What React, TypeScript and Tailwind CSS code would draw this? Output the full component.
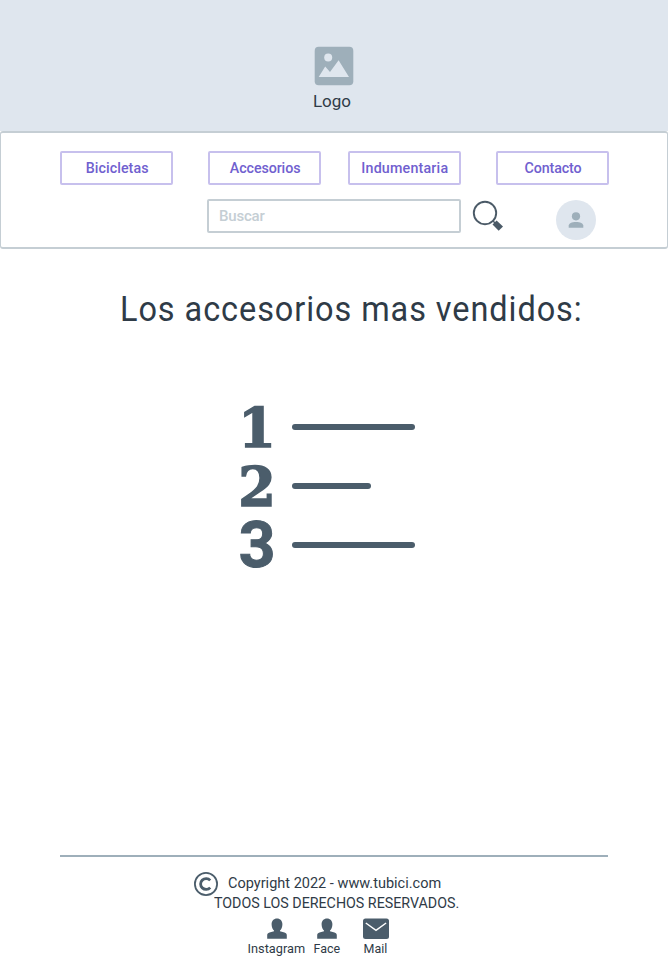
import React from 'react';

const navItems = [
  { label: 'Bicicletas', gap: 'ml-[60px]', type: 'tracking-[0.08px]' },
  { label: 'Accesorios', gap: 'ml-[35px]', type: 'tracking-[-0.1px]' },
  { label: 'Indumentaria', gap: 'ml-[27px]', type: 'tracking-[0.2px]' },
  { label: 'Contacto', gap: 'ml-[35px]', type: 'tracking-[-0.1px]' },
];

function ImageIcon() {
  return (
    <svg width="40" height="40" viewBox="0 0 40 40" className="block">
      <rect x="0.7" y="0.7" width="38.6" height="38.6" rx="4" fill="#9eafba" />
      <circle cx="14.2" cy="11.5" r="4" fill="#dfe6ee" />
      <path d="M4.7 31 11.2 20.5 16 26 24.6 14.3 35 31Z" fill="#dfe6ee" />
    </svg>
  );
}

function SearchIcon() {
  return (
    <svg width="32" height="32" viewBox="0 0 32 32" className="block">
      <circle cx="13" cy="13" r="11.2" fill="none" stroke="#4b5a67" strokeWidth="1.9" />
      <path d="M20.8 20.8 23 23" stroke="#4b5a67" strokeWidth="1.5" />
      <path d="M20.5 24.6 24.6 20.5 31 26.5 26.7 30.8Z" fill="#4b5a67" />
    </svg>
  );
}

function AvatarIcon() {
  return (
    <svg width="40" height="40" viewBox="0 0 40 40" className="block">
      <circle cx="20" cy="20" r="20" fill="#dfe6ee" />
      <circle cx="20" cy="16.3" r="4.1" fill="#9eafba" />
      <path d="M12.7 27.8v-2.2c0-2.2 3-3.7 7.3-3.7s7.3 1.5 7.3 3.7v2.2Z" fill="#9eafba" />
    </svg>
  );
}

function PersonIcon() {
  return (
    <svg width="20" height="21" viewBox="0 0 20 21" className="block">
      <path
        d="M10 .5c3.3 0 5.4 2.3 5.4 5.8 0 2.9-1 5-2.4 6.3v.6l4.5 1.2c1.500.4 2.300 1.400 2.300 2.900v3.400H.2v-3.400c0-1.500.8-2.500 2.300-2.900L7 13.200v-.6C5.600 11.300 4.600 9.200 4.600 6.300 4.600 2.800 6.700.5 10 .5Z"
        fill="#4b5d6b"
      />
    </svg>
  );
}

function MailIcon() {
  return (
    <svg width="26" height="21" viewBox="0 0 26 21" className="block">
      <rect y="0.4" width="26" height="20.6" rx="2.5" fill="#4b5d6b" />
      <path d="M2.8 5 13 12.4 23.1 5" fill="none" stroke="#fff" strokeWidth="1.5" />
    </svg>
  );
}

function CopyrightIcon() {
  return (
    <svg width="24" height="24" viewBox="0 0 24 24" className="block">
      <circle cx="12" cy="12" r="11.1" fill="none" stroke="#4b5d6b" strokeWidth="1.8" />
      <path d="M16.2 8.4A5.5 5.4 0 1 0 16.2 15.6" fill="none" stroke="#4b5d6b" strokeWidth="2.8" />
    </svg>
  );
}

export default function App() {
  return (
    <div className="flex h-[971px] w-[668px] flex-col overflow-hidden bg-white font-['Roboto',sans-serif] text-[#2f3b47]">
      <header className="flex h-[131px] shrink-0 flex-col items-center bg-[#dfe6ee] pt-[46px]">
        <ImageIcon />
        <span className="mt-[5px] mr-[4px] text-[17px] leading-[20px]">Logo</span>
      </header>

      <nav className="h-[118px] shrink-0 rounded-[3px] border-x border-y-2 border-[#c5ced4] bg-white">
        <div className="-ml-px flex pt-[18px]">
          {navItems.map((item) => (
            <button
              key={item.label}
              className={`flex h-[34px] w-[113px] shrink-0 items-center justify-center rounded-[2px] border-2 border-[#c7c0ed] text-[15px] font-medium text-[#7060cf] ${item.gap} ${item.type}`}
            >
              <span className="ml-px inline-block scale-x-[0.95] whitespace-nowrap">{item.label}</span>
            </button>
          ))}
        </div>
        <div className="-ml-px flex pt-[14px]">
          <div className="ml-[207px] flex h-[34px] w-[254px] items-center rounded-[2px] border-2 border-[#c5ced4] pl-[10px] text-[15px] font-medium tracking-[-0.2px] text-[#c5ced4]">
            Buscar
          </div>
          <div className="mt-px ml-[11px]">
            <SearchIcon />
          </div>
          <div className="mt-px ml-[52px]">
            <AvatarIcon />
          </div>
        </div>
      </nav>

      <main className="flex h-[606px] shrink-0 flex-col">
        <h1 className="mt-[41px] ml-[119.5px] h-[40px] origin-left scale-x-[0.928] whitespace-nowrap text-[35px] leading-[40px] tracking-[1px]">
          Los accesorios mas vendidos:
        </h1>
        <div className="mt-[67px] ml-[237px] flex flex-col text-[#4b5d6b]">
          <div className="flex h-[60px] items-center">
            <span className="w-[40px] pt-px text-center font-['DejaVu_Serif',serif] text-[54px] leading-[60px] font-bold [-webkit-text-stroke:1.5px_#4b5d6b]">1</span>
            <span className="ml-[15px] h-[6px] w-[123px] rounded-full bg-[#4b5d6b]" />
          </div>
          <div className="flex h-[58px] items-center">
            <span className="w-[40px] pt-px text-center font-['DejaVu_Serif',serif] text-[54px] leading-[58px] font-bold [-webkit-text-stroke:1.5px_#4b5d6b]">2</span>
            <span className="ml-[15px] h-[6px] w-[79px] rounded-full bg-[#4b5d6b]" />
          </div>
          <div className="flex h-[60px] items-center">
            <span className="w-[40px] pt-[2px] text-center font-['Roboto',sans-serif] text-[64px] leading-[60px] font-bold [-webkit-text-stroke:1px_#4b5d6b]">3</span>
            <span className="ml-[15px] h-[6px] w-[123px] rounded-full bg-[#4b5d6b]" />
          </div>
        </div>
      </main>

      <footer className="mx-[60px] h-[116px] border-t-2 border-[#9eafba]">
        <div className="mt-[15px] ml-[134px] flex h-[24px]">
          <CopyrightIcon />
          <span className="ml-[10px] origin-left scale-x-[0.968] whitespace-nowrap text-[15px] leading-[22px]">Copyright 2022 - www.tubici.com</span>
        </div>
        <div className="-mt-[3px] ml-[154px] h-[20px] w-max origin-left scale-x-[0.95] whitespace-nowrap text-[15px] leading-[20px]">
          TODOS LOS DERECHOS RESERVADOS.
        </div>
        <div className="mt-[5px] ml-[187px] flex text-[13px] leading-[16px]">
          <div className="flex w-[60px] flex-col items-center gap-[2px]">
            <PersonIcon />
            <span className="mr-px scale-x-[0.98]">Instagram</span>
          </div>
          <div className="flex w-[40px] flex-col items-center gap-[2px]">
            <PersonIcon />
            <span className="scale-x-[0.96]">Face</span>
          </div>
          <div className="ml-[12px] flex w-[34px] flex-col items-center gap-[2px]">
            <MailIcon />
            <span className="mr-[2px] scale-x-[0.96]">Mail</span>
          </div>
        </div>
      </footer>
    </div>
  );
}
